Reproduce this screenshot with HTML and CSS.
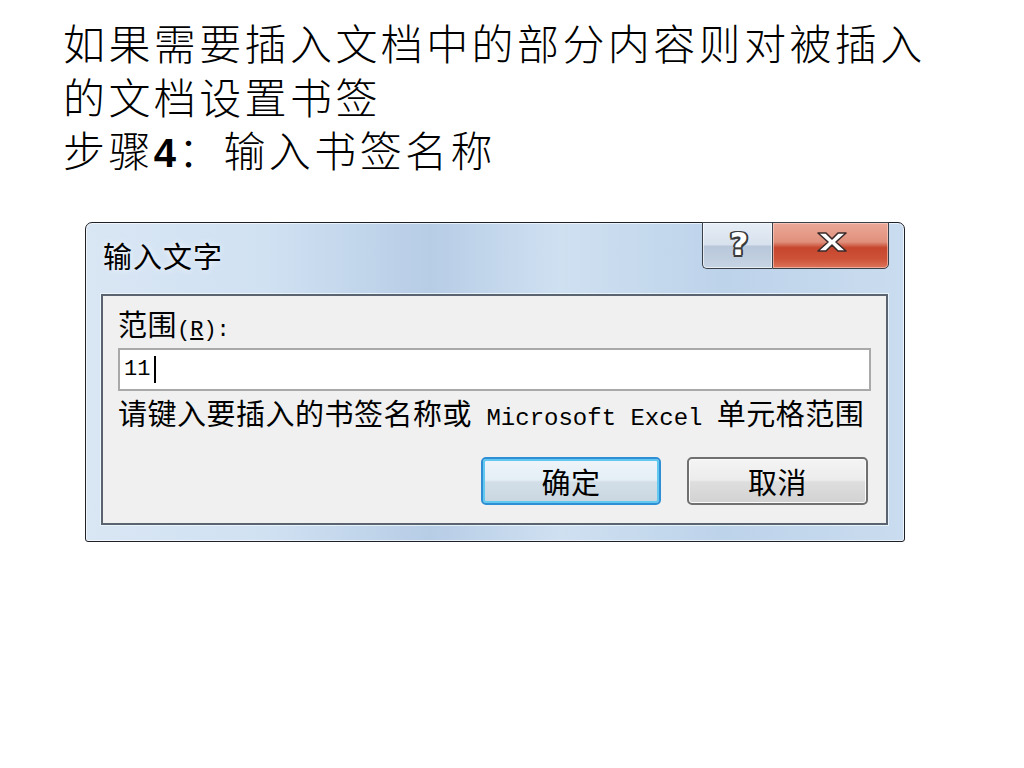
FILE: index.html
```html
<!DOCTYPE html>
<html lang="zh-CN">
<head>
<meta charset="utf-8">
<title>输入书签名称</title>
<link rel="stylesheet" href="styles.css">
</head>
<body>
<div class="slide">
  <p class="heading">如果需要插入文档中的部分内容则对被插入<br>的文档设置书签<br>步骤<span class="num">4</span>：输入书签名称</p>
  <div class="dialog">
    <div class="titlebar">
      <span class="title">输入文字</span>
      <div class="caption-btns">
        <div class="cap help"><span class="q">?</span></div>
        <div class="cap close">
          <svg width="32" height="20" viewBox="0 0 32 20">
            <polygon points="2,1 10,1 16,7 22,1 30,1 20,10 30,19 22,19 16,13 10,19 2,19 12,10" fill="#ffffff" stroke="#3a2a2a" stroke-width="1.6" stroke-linejoin="round"/>
          </svg>
        </div>
      </div>
    </div>
    <div class="panel">
      <div class="label">范围<span class="mono">(<u>R</u>):</span></div>
      <div class="input"><span class="mono val">11</span><span class="caret"></span></div>
      <div class="hint">请键入要插入的书签名称或<span class="mono"> Microsoft Excel </span>单元格范围</div>
      <div class="buttons">
        <div class="btn default">确定</div>
        <div class="btn">取消</div>
      </div>
    </div>
  </div>
</div>
</body>
</html>
```

FILE: styles.css
```css
html, body {
  margin: 0;
  padding: 0;
  background: #ffffff;
}

.slide {
  width: 1024px;
  height: 768px;
  padding: 15px 0 0 63px;
  box-sizing: border-box;
  font-family: "Noto Sans CJK SC", "Noto Sans", sans-serif;
  color: #000;
}

.heading {
  margin: 0;
  height: 161px;
  font-size: 42px;
  line-height: 53.5px;
  letter-spacing: 3.4px;
  font-weight: 300;
  white-space: nowrap;
}

.heading .num {
  font-family: "Liberation Sans", "Noto Sans", sans-serif;
  font-weight: bold;
  font-size: 40px;
  letter-spacing: 2px;
}

.dialog {
  margin: 46px 0 0 22px;
  width: 820px;
  height: 320px;
  box-sizing: border-box;
  border: 1px solid #1e2228;
  border-radius: 7px 7px 3px 3px;
  padding: 0 16px 16px 15px;
  background: linear-gradient(90deg, #d9e6f4 0%, #d0e1f2 22%, #b7cde6 42%, #cfe0f1 58%, #bdd3ea 78%, #cadcef 100%);
  box-shadow: inset 0 0 0 1px rgba(255, 255, 255, 0.65);
  display: flex;
  flex-direction: column;
}

.titlebar {
  height: 71px;
  flex-shrink: 0;
  display: flex;
  align-items: flex-start;
}

.title {
  margin: 17px 0 0 2px;
  font-size: 29px;
  line-height: 30px;
  letter-spacing: 1px;
  color: #000;
  text-shadow: 0 0 6px rgba(255, 255, 255, 0.9);
}

.caption-btns {
  margin: -1px -1px 0 auto;
  display: flex;
}

.cap {
  height: 47px;
  box-sizing: border-box;
  border: 1px solid #3a4049;
  display: flex;
  align-items: center;
  justify-content: center;
}

.help {
  width: 70px;
  border-right: none;
  border-radius: 0 0 0 5px;
  background: linear-gradient(180deg, #e6edf6 0%, #d7e1ed 48%, #b8c7da 52%, #c6d4e4 100%);
  box-shadow: inset 0 0 0 1px rgba(255, 255, 255, 0.6);
}

.q {
  font-family: "DejaVu Sans", sans-serif;
  font-weight: bold;
  font-size: 32px;
  line-height: 32px;
  color: #ffffff;
  margin-top: -4px;
  margin-left: 3px;
  text-shadow: -1.5px -1.5px 0 #3b3b3b, 1.5px -1.5px 0 #3b3b3b, -1.5px 1.5px 0 #3b3b3b, 1.5px 1.5px 0 #3b3b3b, 0 2px 0 #3b3b3b, 2px 0 0 #3b3b3b, -2px 0 0 #3b3b3b;
}

.close {
  width: 117px;
  border-radius: 0 0 5px 0;
  background: linear-gradient(180deg, #eba897 0%, #e0907c 42%, #c6462e 55%, #cd5238 80%, #dc745a 100%);
  box-shadow: inset 0 0 0 1px rgba(255, 220, 210, 0.55);
}

.close svg {
  margin-top: -8px;
  margin-left: 3px;
}

.panel {
  flex: 1;
  min-height: 0;
  border: 2px solid #5a6470;
  background: #f0f0f0;
  box-shadow: 0 0 0 1px rgba(240, 247, 253, 0.8);
  padding: 12px 18px 18px 15px;
  display: flex;
  flex-direction: column;
  font-size: 29px;
  line-height: 30px;
  letter-spacing: 0.5px;
}

.mono {
  font-family: "Liberation Mono", "DejaVu Sans Mono", monospace;
  font-size: 24px;
  letter-spacing: 0;
  line-height: 20px;
}

.label .mono {
  font-size: 22px;
}

.label, .hint {
  height: 30px;
  flex-shrink: 0;
}

.input {
  margin-top: 10px;
  margin-right: -3px;
  height: 43px;
  flex-shrink: 0;
  box-sizing: border-box;
  border: 2px solid #a9a9a9;
  background: #ffffff;
  display: flex;
  align-items: center;
  padding-left: 4px;
}

.input .val {
  font-size: 22px;
}

.caret {
  width: 2px;
  height: 27px;
  background: #000;
  margin-left: 4px;
}

.hint {
  margin-top: 6px;
  white-space: nowrap;
}

.buttons {
  margin-top: 30px;
  display: flex;
  justify-content: flex-end;
  gap: 26px;
}

.btn {
  width: 181px;
  height: 48px;
  box-sizing: border-box;
  border: 2px solid #707070;
  border-radius: 5px;
  background: linear-gradient(180deg, #f4f4f4 0%, #ececec 48%, #dedede 52%, #d2d2d2 100%);
  box-shadow: inset 0 0 0 1px #fbfbfb;
  display: flex;
  align-items: center;
  justify-content: center;
  font-size: 29px;
}

.btn.default {
  width: 180px;
  border-color: #2f8fd4;
  box-shadow: inset 0 0 0 2px #62c8ef;
  background: linear-gradient(180deg, #eef5fa 0%, #e4eef5 48%, #d3dfe8 52%, #c9d6e0 100%);
}
```
